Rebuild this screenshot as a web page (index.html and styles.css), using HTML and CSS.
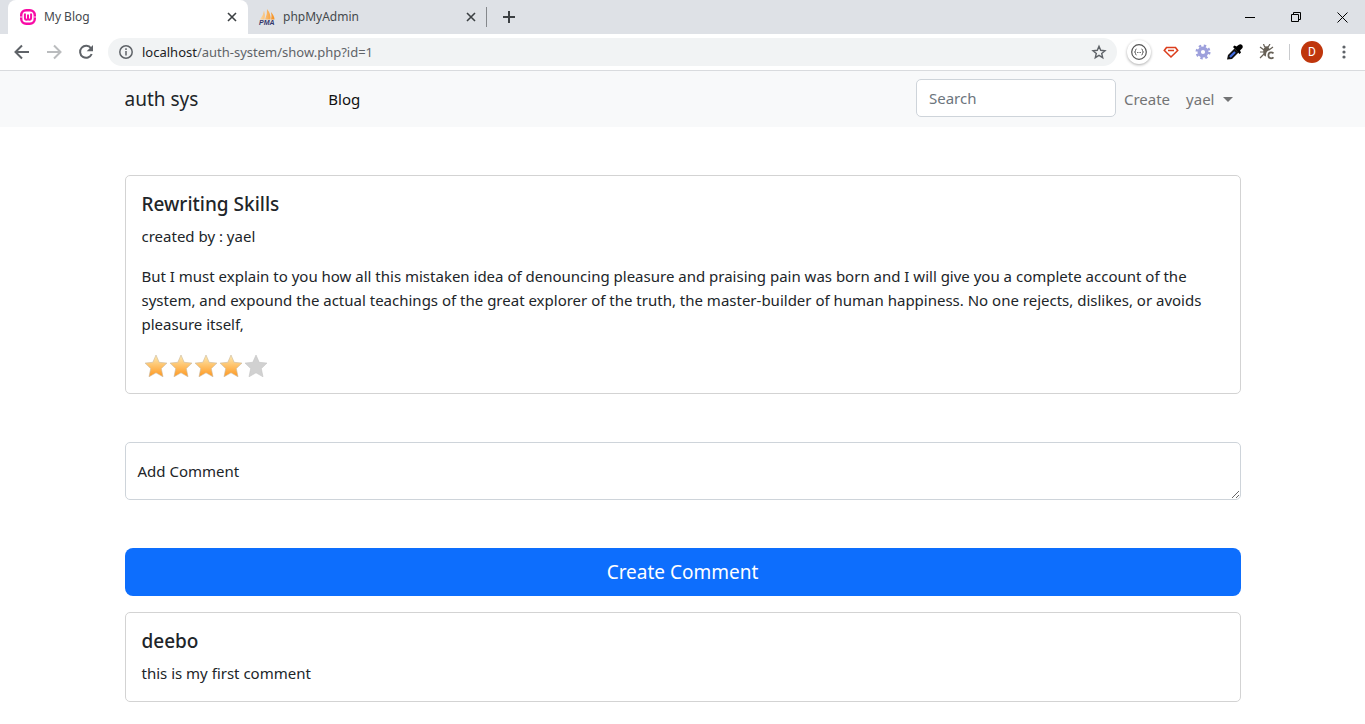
FILE: index.html
```html
<!DOCTYPE html>
<html lang="en">
<head>
<meta charset="utf-8">
<title>My Blog</title>
<link rel="stylesheet" href="styles.css">
</head>
<body>
<header class="browser">
  <div class="tabstrip">
    <div class="tab tab-active">
      <svg class="favicon" viewBox="0 0 16 16" fill="none" stroke="#f80ba6"><rect x="1.2" y="1.2" width="13.6" height="13.600" rx="5" stroke-width="2.400"/><path d="M4.900 4.500v4q0 2.300 1.600 2.300T8 8.500V5.500m0 3q0 2.300 1.500 2.300t1.600-2.300V4.500" stroke-width="2"/><path d="M0 8h2.400M13.600 8H16" stroke="#fff" stroke-width=".8"/></svg>
      <span class="tab-title">My Blog</span>
      <button class="icon-btn tab-close" aria-label="Close My Blog"><svg width="10" height="10" viewBox="0 0 10 10" stroke="#3c4043" stroke-width="1.600"><path d="M1 1l8 8M9 1L1 9"/></svg></button>
    </div>
    <div class="tab tab-idle">
      <svg class="favicon" viewBox="0 0 16 16"><defs><linearGradient id="sail" x2="1"><stop stop-color="#fbd9a5"/><stop offset="1" stop-color="#f7901e"/></linearGradient></defs><path d="M1 10.500Q4.500 6 5 1.500Q6.500 6 5.500 10.500ZM6 10.500Q8.500 5 8 0Q12 5 11.500 10.500ZM12 10.500Q13 7 12 3Q15.500 7 15.500 10.500Z" fill="url(#sail)"/><text class="pma" x="0" y="16">PMA</text></svg>
      <span class="tab-title">phpMyAdmin</span>
      <button class="icon-btn tab-close" aria-label="Close phpMyAdmin"><svg width="10" height="10" viewBox="0 0 10 10" stroke="#3c4043" stroke-width="1.600"><path d="M1 1l8 8M9 1L1 9"/></svg></button>
    </div>
    <span class="tab-divider"></span>
    <button class="icon-btn new-tab" aria-label="New tab"><svg width="12" height="12" viewBox="0 0 12 12" stroke="#3c4043" stroke-width="2"><path d="M6 0v12M0 6h12"/></svg></button>
    <div class="window-controls">
      <button class="icon-btn" aria-label="Minimize"><svg width="11" height="11" viewBox="0 0 11 11" stroke="#000"><path d="M0 5.500h10"/></svg></button>
      <button class="icon-btn" aria-label="Restore"><svg width="11" height="11" viewBox="0 0 11 11" fill="none" stroke="#000"><path d="M.5 2.500h7v7h-7zM2.500 2.500v-2h7v7h-2"/></svg></button>
      <button class="icon-btn" aria-label="Close"><svg width="11" height="11" viewBox="0 0 11 11" stroke="#000"><path d="M.5.5l10 10M10.500.5l-10 10"/></svg></button>
    </div>
  </div>
  <div class="toolbar">
    <div class="nav-buttons">
      <button class="icon-btn" aria-label="Back"><svg width="16" height="16" viewBox="0 0 16 16" fill="none" stroke="#5f6368" stroke-width="2"><path d="M15 8H2M8 1.500L1.500 8 8 14.500"/></svg></button>
      <button class="icon-btn" aria-label="Forward"><svg width="16" height="16" viewBox="0 0 16 16" fill="none" stroke="#babcbe" stroke-width="2"><path d="M1 8h13M8 1.500L14.500 8 8 14.500"/></svg></button>
      <button class="icon-btn" aria-label="Reload"><svg width="16" height="16" viewBox="0 0 16 16"><path d="M13 4.300A6 6 0 1 0 13.700 10" fill="none" stroke="#5f6368" stroke-width="2"/><path d="M15 1v6.300H8.700z" fill="#5f6368"/></svg></button>
    </div>
    <div class="omnibox">
      <svg width="14" height="14" viewBox="0 0 14 14" fill="none" stroke="#5f6368" stroke-width="1.500"><circle cx="7" cy="7" r="6.200"/><path d="M7 6v4.500M7 3.300v1.600"/></svg>
      <span class="url"><span class="url-host">localhost</span>/auth-system/show.php?id=1</span>
      <button class="icon-btn" aria-label="Bookmark this page"><svg width="16" height="16" viewBox="0 0 16 16" fill="none" stroke="#5f6368" stroke-width="1.400"><path d="M8 2.300l1.700 4 4.300.4-3.300 2.800 1 4.200L8 11.400l-3.700 2.300 1-4.200L2 6.700l4.300-.4z"/></svg></button>
    </div>
    <div class="extensions">
      <button class="icon-btn ext-round" aria-label="JSON viewer"><svg width="16" height="16" viewBox="0 0 16 16" fill="none" stroke="#555"><circle cx="8" cy="8" r="7.300" stroke-width="1.200"/><path d="M5.500 5Q4.500 5 4.500 6.500T3.500 8Q4.500 8 4.500 9.500T5.500 11M10.500 5q1 0 1 1.500t1 1.500q-1 0-1 1.500t-1 1.500M6.200 8.500h1M7.700 8.500h.8M9 8.500h.8"/></svg></button>
      <button class="icon-btn" aria-label="Gem tools"><svg width="16" height="16" viewBox="0 0 16 16" fill="none" stroke="#db3e1d" stroke-width="1.600"><path d="M3.500 3.500h9L14.700 6.500 8 13 1.300 6.500zM5 6.500h6"/></svg></button>
      <button class="icon-btn" aria-label="Settings extension"><svg width="16" height="16" viewBox="0 0 16 16" fill="none" stroke="#9da0dc"><circle cx="8" cy="8" r="3.800" stroke-width="3.400"/><circle cx="8" cy="8" r="6.300" stroke-width="2.400" stroke-dasharray="2.400 2.550"/></svg></button>
      <button class="icon-btn" aria-label="Color picker"><svg width="16" height="16" viewBox="0 0 16 16"><path d="M0 15.500L1 11l6.500-6.500 4 4L5 15z" fill="#111"/><path d="M3 13l5-5" stroke="#426fe8" stroke-width="2.200"/><path d="M6 3l1.500-1.500 2 1L11.500 1Q13.500-.5 15 1t0 3.500L13 6.500l1 2L12.500 10z" fill="#000"/></svg></button>
      <button class="icon-btn" aria-label="Cache cleaner"><svg width="16" height="16" viewBox="0 0 16 16" fill="none" stroke="#666056" stroke-width="1.200"><path d="M4.500 0l1 2.500 2 1 2-1 1.500-2.500M5 6L1 3M4.500 8H1M5 10l-4 4M10 6l4-3"/><ellipse cx="7.500" cy="7.500" rx="2.700" ry="4.500" fill="#666056"/><path d="M14.500 9.300Q13.500 8 11.700 8q-3 0-3 3.200t3 3.200q1.800 0 2.800-1.300" stroke="#fff" stroke-width="3.500"/><path d="M14.500 9.300Q13.500 8.300 12 8.300q-2.600 0-2.600 3t2.600 3q1.500 0 2.500-1" stroke-width="1.700"/></svg></button>
      <span class="ext-divider"></span>
      <button class="avatar" aria-label="Profile">D</button>
      <button class="icon-btn" aria-label="Menu"><svg width="16" height="16" viewBox="0 0 16 16" fill="#5f6368"><circle cx="8" cy="3" r="1.600"/><circle cx="8" cy="8" r="1.600"/><circle cx="8" cy="13" r="1.600"/></svg></button>
    </div>
  </div>
</header>
<nav class="navbar">
  <div class="container navbar-inner">
    <a class="brand" href="#">auth sys</a>
    <a class="nav-link nav-link-active" href="#">Blog</a>
    <div class="navbar-end">
      <input class="search" type="search" placeholder="Search" aria-label="Search">
      <a class="nav-link" href="#">Create</a>
      <a class="nav-link dropdown-toggle" href="#">yael</a>
    </div>
  </div>
</nav>
<main class="container page">
  <article class="card">
    <h1 class="card-title">Rewriting Skills</h1>
    <p class="card-text">created by : yael</p>
    <p class="card-text">But I must explain to you how all this mistaken idea of denouncing pleasure and praising pain was born and I will give you a complete account of the system, and expound the actual teachings of the great explorer of the truth, the master-builder of human happiness. No one rejects, dislikes, or avoids pleasure itself,</p>
    <svg class="stars" viewBox="0 0 125 25" role="img" aria-label="4 out of 5 stars">
      <defs>
        <linearGradient id="gold" x2="0" y2="1"><stop offset=".1" stop-color="#fde3a6"/><stop offset="1" stop-color="#ff981f"/></linearGradient>
        <path id="star" d="M14 3l3.200 7.300 7.800.8-5.700 5.500 1.700 8.200-7-4-7 4 1.700-8.200L3 11.100l7.800-.8z"/>
      </defs>
      <g fill="url(#gold)" stroke="#c9b9a0" stroke-width=".6"><use href="#star"/><use href="#star" x="25"/><use href="#star" x="50"/><use href="#star" x="75"/></g>
      <use href="#star" x="100" fill="#d1d1d1" stroke="#c4c4c4" stroke-width=".6"/>
    </svg>
  </article>
  <form class="comment-form">
    <textarea class="comment-input" aria-label="Comment" placeholder="Add Comment"></textarea>
    <button class="submit" type="button">Create Comment</button>
  </form>
  <article class="card">
    <h2 class="card-title">deebo</h2>
    <p class="card-text">this is my first comment</p>
  </article>
</main>
</body>
</html>
```
FILE: styles.css
```css
* { box-sizing: border-box; }
body {
  margin: 0;
  background: #fff;
  color: #212529;
  font: 15px/24px "Noto Sans", "Open Sans", sans-serif;
}
button, input, textarea { font: inherit; }
a { text-decoration: none; }
svg { display: block; flex: none; }

.icon-btn {
  display: flex;
  align-items: center;
  justify-content: center;
  padding: 0;
  border: 0;
  background: none;
}

/* Browser window */
.browser {
  border-bottom: 1px solid #d9dbde;
  font-size: 12px;
  line-height: 16px;
}
.tabstrip {
  display: flex;
  align-items: center;
  height: 34px;
  padding-left: 8px;
  background: linear-gradient(#dee1e6, #dee1e6);
}
.tab {
  display: flex;
  align-items: center;
  gap: 8px;
  height: 34px;
  color: #45494d;
}
.tab-active {
  width: 240px;
  padding: 0 10px 0 12px;
  border-radius: 8px 8px 0 0;
  background: #fff;
}
.tab-idle { width: 238px; padding: 0 9px 0 11px; }
.favicon { width: 16px; height: 16px; overflow: visible; }
.pma { font: italic bold 7px "Liberation Sans", sans-serif; fill: #34366b; }
.tab-title { flex: 1; }
.tab-close { width: 12px; height: 16px; }
.tab-divider { width: 1px; height: 20px; background: #85888c; }
.new-tab { width: 44px; height: 28px; }
.window-controls { display: flex; margin-left: auto; }
.window-controls .icon-btn { width: 46px; height: 28px; }
.toolbar {
  display: flex;
  align-items: center;
  height: 36px;
  padding: 0 13px 0 14px;
}
.nav-buttons { display: flex; gap: 16px; margin-right: 14px; }
.omnibox {
  display: flex;
  flex: 1;
  align-items: center;
  gap: 9px;
  height: 28px;
  padding: 0 10px 0 11px;
  border-radius: 14px;
  background: #f1f3f4;
}
.url { flex: 1; color: #5f6368; font-size: 13px; }
.url-host { color: #202124; }
.extensions { display: flex; align-items: center; gap: 16px; margin-left: 10px; }
.ext-round {
  width: 24px;
  height: 24px;
  margin-right: -4px;
  border-radius: 50%;
  box-shadow: 0 1px 3px #0005;
}
.ext-divider { width: 1px; height: 16px; margin: 0 -5px 0 -2px; background: #c9cbce; }
.avatar {
  width: 22px;
  height: 22px;
  margin-right: -3px;
  padding: 0;
  border: 0;
  border-radius: 50%;
  background: #bf360c;
  color: #fff;
  font: 12px/22px Roboto, sans-serif;
}

/* Page */
.container {
  width: 100%;
  max-width: 1140px;
  margin: 0 auto;
  padding: 0 12px;
}
.navbar { background: #f8f9fa; }
.navbar-inner { display: flex; align-items: center; min-height: 56px; }
.brand { margin-right: 122px; color: #212529; font-size: 19px; line-height: 28px; }
.nav-link { padding: 8px; color: #737475; }
.nav-link-active { color: #111; }
.navbar-end { display: flex; align-items: center; margin-left: auto; }
.search {
  width: 200px;
  height: 38px;
  margin-bottom: 2px;
  padding: 6px 12px;
  border: 1px solid #ced4da;
  border-radius: 5px;
  background: #fff;
}
.search::placeholder { color: #6c757d; }
.dropdown-toggle { display: flex; align-items: center; gap: 8px; }
.dropdown-toggle::after {
  border: 5px solid transparent;
  border-top-color: currentColor;
  border-bottom: 0;
  content: "";
}
.page { padding-top: 48px; }
.card {
  padding: 16px;
  border: 1px solid #d3d3d3;
  border-radius: 5px;
}
.card-title { margin: 0 0 8px; font-size: 19px; font-weight: 500; line-height: 24px; }
.card-text { margin: 0 0 16px; }
.card-text:last-child { margin-bottom: 0; }
.stars { width: 125px; height: 25px; overflow: visible; }
.comment-form { display: grid; gap: 48px; margin: 48px 0 16px; }
.comment-input {
  display: block;
  width: 100%;
  height: 58px;
  padding: 16px 12px;
  border: 1px solid #ced4da;
  border-radius: 5px;
  color: #212529;
  resize: vertical;
}
.comment-input::placeholder { color: #212529; }
.submit {
  height: 48px;
  padding: 0 16px;
  border: 0;
  border-radius: 8px;
  background: #0d6efd;
  color: #fff;
  font-size: 19px;
}
```
